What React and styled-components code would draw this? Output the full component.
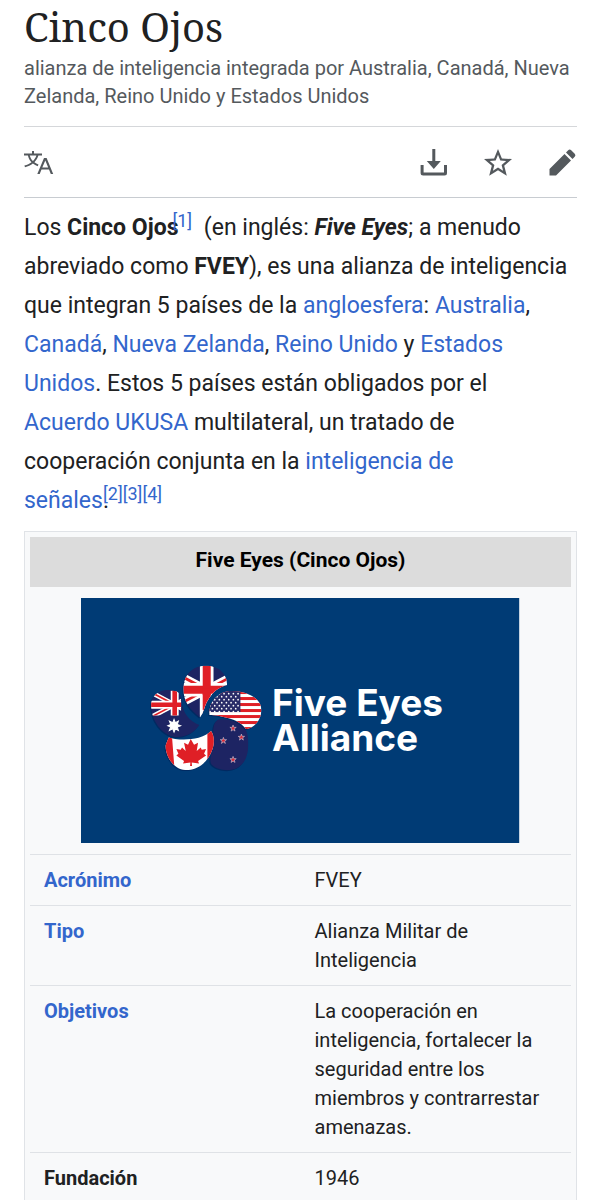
import React from 'react';
import styled, { createGlobalStyle } from 'styled-components';

const GlobalStyle = createGlobalStyle`
  * { box-sizing: border-box; }
  body {
    margin: 0;
    background: #fff;
    color: #202122;
    font-family: Roboto, "Liberation Sans", sans-serif;
  }
`;

const Page = styled.main`
  padding: 0 23px 0 24px;
`;

const Title = styled.h1`
  margin: 0;
  font-family: "Noto Serif", "DejaVu Serif Condensed", "DejaVu Serif", serif;
  font-size: 40px;
  line-height: 54px;
  font-weight: 400;
`;

const Subtitle = styled.p`
  margin: 0;
  padding: 0 0 16px;
  color: #54595d;
  font-size: 20px;
  line-height: 28px;
`;

const Toolbar = styled.nav`
  display: flex;
  align-items: center;
  justify-content: space-between;
  height: 72px;
  padding-top: 2px;
  border-top: 1px solid #d5d7da;
  border-bottom: 1px solid #c8ccd1;
`;

const Actions = styled.div`
  display: flex;
  gap: 34px;
`;

const IconButton = styled.button`
  display: flex;
  padding: 0;
  border: 0;
  background: none;
  color: #54595d;
  cursor: pointer;

  svg {
    display: block;
    width: 30px;
    height: 30px;
    fill: currentColor;
  }
`;

const Link = styled.a`
  color: #3366cc;
  text-decoration: none;
`;

const Lead = styled.p`
  margin: 0;
  padding: 10px 8px 11px 0;
  font-size: 23px;
  line-height: 39px;
`;

const NoWrap = styled.span`
  white-space: nowrap;
`;

const Reference = styled.sup`
  margin-left: ${(p) => (p.$first ? '-6px' : '0')};
  margin-right: ${(p) => (p.$spaced ? '6px' : '0')};
  font-size: 18px;
  line-height: 1;
  vertical-align: 8px;
`;

const Infobox = styled.table`
  width: 100%;
  padding: 5px;
  border: 1px solid #e0e3e7;
  border-spacing: 0;
  background: #f8f9fa;
  font-size: 20px;
  line-height: 29px;
  table-layout: fixed;
`;

const Heading = styled.th`
  padding: 9px 0 12px;
  background: #dcdcdc;
  color: #000;
  font-size: 21px;
  font-weight: 700;
`;

const PictureCell = styled.td`
  padding: 11px 0;
`;

const Logo = styled.svg`
  display: block;
  width: 81%;
  margin: 0 auto;
`;

const Cell = styled.td`
  padding: 11px 14px 10px;
  border-top: 1px solid #dfe2e6;
  text-align: left;
  vertical-align: top;
`;

const STAR = 'M0-10 2.4-3.2 9.5-3.1 3.8 1.2 5.9 8.1 0 4-5.9 8.1-3.8 1.2-9.5-3.1-2.4-3.2Z';

const petals = {
  uk: 'M180 187C150 165 130 140 130 103C130 62 155 32 197 32C235 32 262 55 261 90C235 98 218 110 205 133C193 150 192 172 180 187Z',
  us: 'M208 180C206 140 235 108 275 108C320 108 364 130 364 165C364 195 340 222 318 222C300 200 280 192 250 186C235 181 220 179 208 180Z',
  nz: 'M235 193C215 205 219 235 222 255C224 285 204 305 213 326C225 342 255 348 275 344C310 338 325 305 325 265C324 240 320 230 316 222C298 202 275 191 235 193Z',
  ca: 'M86 247C110 256 180 260 213 228C222 240 224 262 218 280C205 320 175 345 140 345C100 345 78 305 76 272Z',
  au: 'M33 150C33 120 60 102 90 105C112 108 123 112 124 135C127 175 150 200 178 210C160 235 135 248 105 246C65 240 33 195 33 150Z',
};

function Petal({ name, children }) {
  return (
    <g>
      <path d={petals[name]} fill="#001f55" opacity="0.6" transform="translate(-3 3)" />
      <g clipPath={`url(#petal-${name})`}>{children}</g>
    </g>
  );
}

function UnionCross({ x, y, w, h, t }) {
  const cx = x + w / 2;
  const cy = y + h / 2;
  const diagonals = `M${x} ${y}L${x + w} ${y + h}M${x + w} ${y}L${x} ${y + h}`;
  const cross = `M${cx} ${y}V${y + h}M${x} ${cy}H${x + w}`;
  return (
    <g fill="none">
      <path d={diagonals} stroke="#fff" strokeWidth={t} />
      <path d={diagonals} stroke="#e01f26" strokeWidth={t * 0.35} />
      <path d={cross} stroke="#fff" strokeWidth={t * 1.7} />
      <path d={cross} stroke="#e01f26" strokeWidth={t} />
    </g>
  );
}

function AllianceLogo() {
  const usStars = [];
  for (let r = 0; r < 7; r += 1) {
    for (let c = 0; c < 7; c += 1) {
      const cx = 210 + c * 14 + (r % 2) * 7;
      if (cx < 298) {
        usStars.push(<circle key={`${r}-${c}`} cx={cx} cy={116 + r * 9} r="2.6" fill="#fff" />);
      }
    }
  }
  return (
    <Logo viewBox="0 0 438 245" role="img" aria-label="Five Eyes Alliance">
      <defs>
        {Object.keys(petals).map((k) => (
          <clipPath id={`petal-${k}`} key={k}>
            <path d={petals[k]} />
          </clipPath>
        ))}
        <clipPath id="canton">
          <rect x="25" y="95" width="98" height="86" />
        </clipPath>
      </defs>
      <rect width="438" height="245" fill="#003b75" />
      <g transform="translate(59 57) scale(.3333)">
        <Petal name="nz">
          <rect x="200" y="180" width="140" height="180" fill="#1d2463" />
          {[[279, 220], [304, 247], [250, 257], [279, 314]].map(([x, y]) => (
            <path key={`${x}-${y}`} d={STAR} transform={`translate(${x} ${y})`} fill="#d92735" stroke="#c9bfd2" strokeWidth="2" />
          ))}
        </Petal>
        <Petal name="ca">
          <rect x="60" y="220" width="170" height="130" fill="#fff" />
          <path d="M60 220H94L104 350H60ZM202 220H230V350H202Z" fill="#df1f26" />
          <path
            d="M152 252L162 269L174 263L170 288L182 277L185 284L198 282L192 296L198 301L174 318L177 325L155 322L156 333H150L151 322L129 325L132 318L109 301L115 296L109 282L122 284L126 277L137 288L132 263L144 269Z"
            fill="#df1f26"
          />
        </Petal>
        <Petal name="au">
          <rect x="25" y="95" width="160" height="160" fill="#1d2463" />
          <g clipPath="url(#canton)">
            <UnionCross x={24} y={107} w={160} h={84} t={14} />
          </g>
          <path d="M102 193L106 203L115 198L112 208L122 212L112 216L115 226L106 221L102 231L98 221L88 226L92 216L83 212L92 208L88 198L98 203Z" fill="#fff" stroke="#fff" strokeWidth="3" />
        </Petal>
        <Petal name="us">
          <rect x="200" y="100" width="170" height="130" fill="#fff" />
          {[108, 126, 144, 162, 180, 198, 216].map((y) => (
            <rect key={y} x="200" y={y} width="170" height="9" fill="#df1f26" />
          ))}
          <rect x="200" y="100" width="101" height="71" fill="#282b67" />
          {usStars}
        </Petal>
        <Petal name="uk">
          <rect x="120" y="20" width="150" height="180" fill="#1d2463" />
          <UnionCross x={60} y={30} w={280} h={148} t={24} />
          <path d="M200 120V200" stroke="#fff" strokeWidth="41" />
          <path d="M200 100V165" stroke="#e01f26" strokeWidth="24" />
        </Petal>
      </g>
      <g fill="#fff" fontFamily="Inter, sans-serif" fontWeight="700" fontSize="37">
        <text x="191" y="118">Five Eyes</text>
        <text x="191" y="153">Alliance</text>
      </g>
    </Logo>
  );
}

const rows = [
  { label: 'Acrónimo', value: 'FVEY', link: true },
  { label: 'Tipo', value: 'Alianza Militar de Inteligencia', link: true },
  {
    label: 'Objetivos',
    value: 'La cooperación en inteligencia, fortalecer la seguridad entre los miembros y contrarrestar amenazas.',
    link: true,
  },
  { label: 'Fundación', value: '1946', link: false },
];

export default function App() {
  return (
    <Page>
      <GlobalStyle />
      <Title>Cinco Ojos</Title>
      <Subtitle>
        alianza de inteligencia integrada por Australia, Canadá, Nueva Zelanda, Reino Unido y Estados Unidos
      </Subtitle>
      <Toolbar aria-label="Acciones">
        <IconButton aria-label="Idioma">
          <svg viewBox="0 -2 30 30">
            <path d="M0 3.6H8V1H10V3.6H18V5.4H14.4C13.5 8.2 12.1 10.4 10.4 12.2C11.6 13.1 13 13.9 14.5 14.4L13.7 16.2C11.9 15.5 10.3 14.6 8.9 13.5C6.7 15.3 4 16.5 1 17.2L.4 15.4C3.2 14.8 5.6 13.7 7.5 12.2C5.9 10.6 4.7 8.5 3.9 5.4H0ZM5.8 5.4C6.5 7.8 7.5 9.6 8.9 11C10.4 9.5 11.6 7.7 12.4 5.4Z" />
            <path d="M20 8H22.6L29.2 24H26.8L25 19.4H17.5L15.7 24H13.3ZM21.3 10.4L18.3 17.4H24.2Z" />
          </svg>
        </IconButton>
        <Actions>
          <IconButton aria-label="Descargar">
            <svg viewBox="0 0 30 30">
              <path d="M13.3 1H16.3V13H21.8L14.8 21L7.8 13H13.3ZM1.6 17H4.6V24.5H25V17H28V25Q28 27.5 25.5 27.5H4.1Q1.6 27.5 1.6 25Z" />
            </svg>
          </IconButton>
          <IconButton aria-label="Guardar">
            <svg viewBox="0 0 30 30">
              <path
                fillRule="evenodd"
                d="M15 1L18.9 10.5L29 11.1L21.2 17.7L23.8 27.7L15 22.2L6.2 27.7L8.8 17.7L1 11.1L11.1 10.5ZM15 6.8L12.7 12.6L6.8 13L11.4 16.9L9.9 22.8L15 19.6L20.1 22.8L18.6 16.9L23.2 13L17.3 12.6Z"
              />
            </svg>
          </IconButton>
          <IconButton aria-label="Editar">
            <svg viewBox="0 0 30 30">
              <path d="M2.5 21L17.5 6L24 12.5L9 27.5H2.5ZM19 4.5L21.2 2.3Q22.7 .8 24.2 2.3L27.7 5.8Q29.2 7.3 27.7 8.8L25.5 11Z" />
            </svg>
          </IconButton>
        </Actions>
      </Toolbar>
      <Lead>
        Los <b>Cinco Ojos</b>
        <Reference $first $spaced><Link href="#ref1">[1]</Link></Reference>
        {' '}(en inglés: <b><i>Five Eyes</i></b>; a menudo abreviado como <b>FVEY</b>), es una alianza de
        inteligencia que integran 5 países de la <Link href="#angloesfera">angloesfera</Link>:{' '}
        <Link href="#australia">Australia</Link>, <Link href="#canada">Canadá</Link>,{' '}
        <Link href="#nz">Nueva Zelanda</Link>, <Link href="#uk">Reino Unido</Link> y{' '}
        <Link href="#us">Estados Unidos</Link>. Estos 5 países están obligados por el{' '}
        <Link href="#ukusa">Acuerdo UKUSA</Link> multilateral, un tratado de cooperación conjunta en la{' '}
        <Link href="#sigint">inteligencia de</Link>{' '}
        <NoWrap>
          <Link href="#sigint">señales</Link>.
          <Reference $first><Link href="#ref2">[2]</Link></Reference>
          <Reference><Link href="#ref3">[3]</Link></Reference>
          <Reference><Link href="#ref4">[4]</Link></Reference>
        </NoWrap>
      </Lead>
      <Infobox>
        <thead>
          <tr>
            <Heading colSpan={2}>Five Eyes (Cinco Ojos)</Heading>
          </tr>
        </thead>
        <tbody>
          <tr>
            <PictureCell colSpan={2}>
              <AllianceLogo />
            </PictureCell>
          </tr>
          {rows.map((row) => (
            <tr key={row.label}>
              <Cell as="th" scope="row">
                {row.link ? <Link href={`#${row.label}`}>{row.label}</Link> : row.label}
              </Cell>
              <Cell>{row.value}</Cell>
            </tr>
          ))}
        </tbody>
      </Infobox>
    </Page>
  );
}
